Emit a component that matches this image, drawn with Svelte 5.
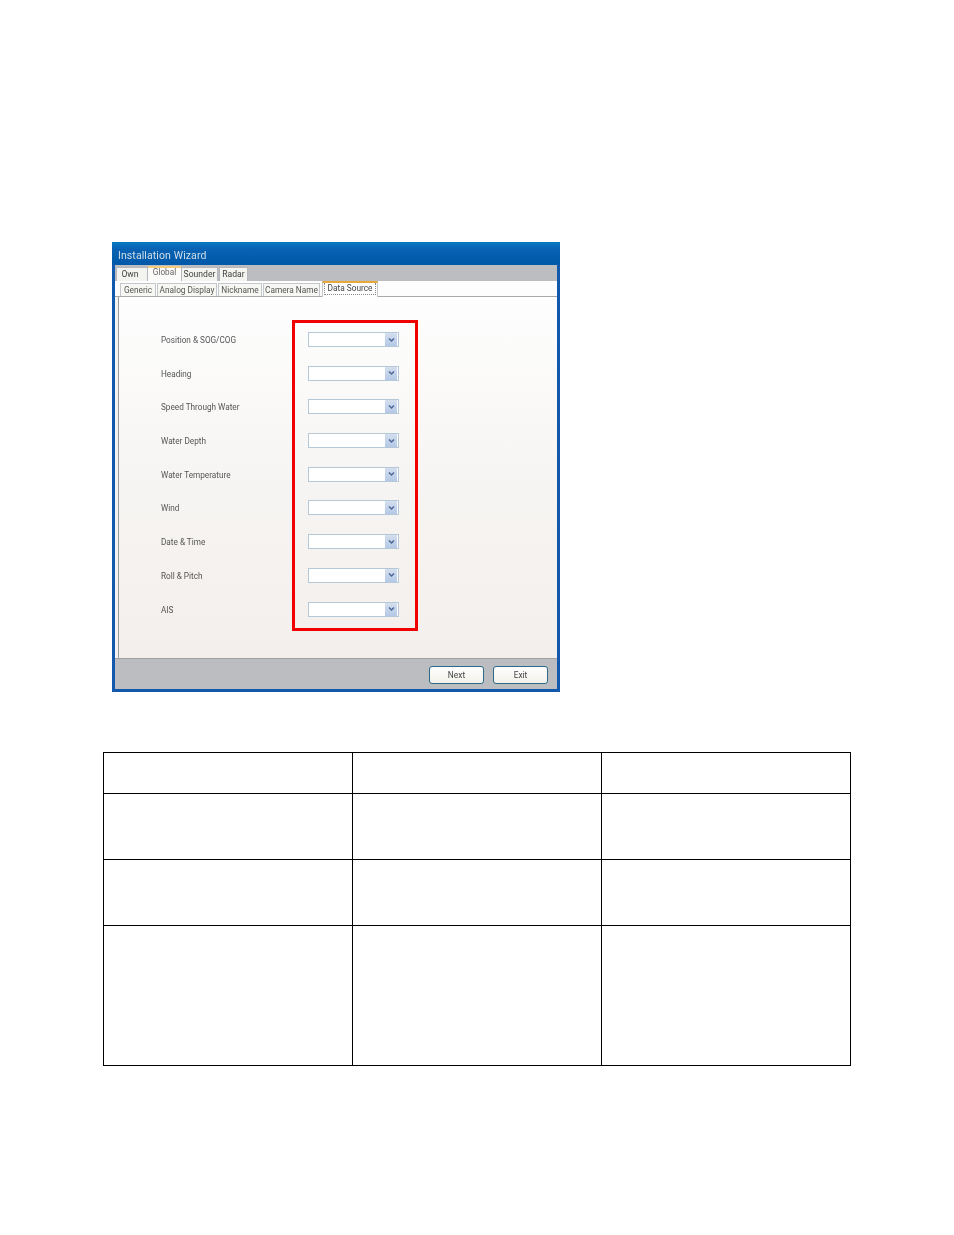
<script>
  const topTabs = [
    { label: 'Own', w: 32 },
    { label: 'Global', w: 33, active: true },
    { label: 'Sounder', w: 37 },
    { label: 'Radar', w: 29 }
  ];
  const subTabs = [
    { label: 'Generic', w: 36 },
    { label: 'Analog Display', w: 60 },
    { label: 'Nickname', w: 44 },
    { label: 'Camera Name', w: 57 },
    { label: 'Data Source', w: 56, active: true }
  ];
  const rows = ['Position & SOG/COG', 'Heading', 'Speed Through Water', 'Water Depth', 'Water Temperature', 'Wind', 'Date & Time', 'Roll & Pitch', 'AIS'];
  const tableRows = ['r1', 'r2', 'r3', 'r4'];
</script>

<div class="page">
  <section class="window">
    <header class="title"><span class="soft">Installation Wizard</span></header>
    <nav class="tabs">
      {#each topTabs as t}
        <span class="tab" class:active={t.active} style="width:{t.w}px"><span class="soft">{t.label}</span></span>
      {/each}
    </nav>
    <nav class="subtabs">
      {#each subTabs as t}
        <span class="subtab" class:active={t.active} style="width:{t.w}px"><span class="inner soft">{t.label}</span></span>
      {/each}
    </nav>
    <div class="body">
      <div class="panel">
        <div class="form">
          {#each rows as r}
            <div class="row">
              <span class="label soft">{r}</span>
              <span class="combo">
                <span class="arrow">
                  <svg width="7" height="6" viewBox="0 0 7 6"><path d="M1 1.5 L3.5 4 L6 1.5" fill="none" stroke="#4f6796" stroke-width="1.5"/></svg>
                </span>
              </span>
            </div>
          {/each}
        </div>
        <div class="redbox"></div>
      </div>
    </div>
    <footer class="footer">
      <button class="btn"><span class="soft">Next</span></button>
      <button class="btn"><span class="soft">Exit</span></button>
    </footer>
  </section>

  <div class="table">
    {#each tableRows as r}
      <div class="tr {r}">
        <div class="td"></div>
        <div class="td"></div>
        <div class="td"></div>
      </div>
    {/each}
  </div>
</div>

<style>
  :global(body) {
    margin: 0;
    background: #fff;
  }
  .page {
    width: 954px;
    height: 1235px;
    padding-top: 242px;
    box-sizing: border-box;
    font-family: Roboto, "Liberation Sans", sans-serif;
    overflow: hidden;
  }
  .soft {
    filter: blur(0.3px);
  }
  .window {
    width: 448px;
    height: 450px;
    margin-left: 112px;
    box-sizing: border-box;
    display: flex;
    flex-direction: column;
    border-left: 3px solid #1258ad;
    border-right: 3px solid #1258ad;
    border-bottom: 3px solid #1258ad;
    background: #bcbdc1;
  }
  .title {
    height: 23px;
    margin: 0 -3px;
    padding: 5px 0 0 6px;
    box-sizing: border-box;
    background: linear-gradient(#0a78c4 0, #0a62b4 30%, #0058a8 100%);
    color: #d3dfe8;
    font-size: 10.5px;
    line-height: 17px;
    font-family: Roboto, sans-serif;
    letter-spacing: 0.1px;
  }
  .title .soft {
    display: inline-block;
  }
  .tabs {
    display: flex;
    height: 16px;
    padding-left: 1px;
    background: #bcbdc1;
  }
  .tab {
    box-sizing: border-box;
    height: 14px;
    margin-top: 2px;
    background: #f3f3f0;
    border: 1px solid #b4b8bd;
    border-bottom: 0;
    text-align: center;
    color: #3f3f3f;
    font-size: 8.6px;
    line-height: 12px;
  }
  .tab:first-child {
    padding-right: 4px;
  }
  .tab:nth-child(3) {
    margin-right: 1px;
  }
  .tab.active {
    margin-top: 1px;
    height: 15px;
    background: #fbfbf9;
    border: 0;
    border-top: 2px solid #f3cb80;
    color: #666;
    font-size: 8.2px;
    line-height: 9px;
  }
  .subtabs {
    display: flex;
    height: 16px;
    box-sizing: border-box;
    padding-left: 5px;
    gap: 1px;
    background: #fdfdfd;
    border-bottom: 1px solid #a9a9a9;
  }
  .subtab {
    box-sizing: border-box;
    height: 13px;
    margin-top: 2px;
    border: 1px solid #c4c8cc;
    border-bottom: 0;
    background: #f7f7f4;
    text-align: center;
    color: #555;
    font-size: 8.3px;
    line-height: 12px;
    white-space: nowrap;
  }
  .subtab:nth-child(4) {
    margin-right: 1px;
  }
  .inner {
    display: block;
  }
  .subtab.active {
    margin-top: 0;
    height: 16px;
    background: #fff;
    border-top: 2px solid #e8a93c;
    color: #444;
  }
  .subtab.active .inner {
    height: 11px;
    margin: 0 1px;
    border: 1px dotted #888;
    border-top: 0;
    line-height: 10px;
  }
  .body {
    flex: 1;
    display: flex;
    padding-left: 3px;
    background: #f4f3f1;
  }
  .panel {
    position: relative;
    flex: 1;
    padding-top: 35px;
    border-left: 1px solid #9a9a9a;
    box-sizing: border-box;
    background: linear-gradient(#fefefe 0, #f6f4f2 55%, #f3efec 100%);
  }
  .form {
    display: flex;
    flex-direction: column;
    gap: 18.7px;
    padding-left: 42px;
  }
  .row {
    display: flex;
    align-items: center;
    height: 15px;
  }
  .label {
    width: 147px;
    padding-top: 2px;
    color: #555;
    font-size: 8.2px;
    line-height: 15px;
    white-space: nowrap;
  }
  .combo {
    display: flex;
    justify-content: flex-end;
    align-items: center;
    box-sizing: border-box;
    width: 91px;
    height: 15px;
    padding-right: 1px;
    background: #fff;
    border: 1px solid #b4c8d8;
  }
  .arrow {
    display: flex;
    align-items: center;
    justify-content: center;
    width: 12px;
    height: 13px;
    background: linear-gradient(#d4dfee, #b4c8e6);
  }
  .redbox {
    position: absolute;
    left: 173px;
    top: 23px;
    width: 126px;
    height: 311px;
    box-sizing: border-box;
    border: 3px solid #f00000;
  }
  .footer {
    display: flex;
    justify-content: flex-end;
    gap: 9px;
    height: 31px;
    box-sizing: border-box;
    padding: 7px 9px 0 0;
    border-top: 1px solid #9fa19f;
    background: #bcbdc1;
  }
  .btn {
    box-sizing: border-box;
    width: 55px;
    height: 18px;
    padding: 0;
    border: 1px solid #2c6a88;
    border-radius: 3px;
    background: linear-gradient(#ffffff, #f2f1ea);
    color: #444;
    font-family: inherit;
    font-size: 8.4px;
    line-height: 16px;
  }
  .table {
    width: 748px;
    margin: 60px 0 0 103px;
    box-sizing: border-box;
    border-top: 1px solid #000;
    border-left: 1px solid #000;
    display: flex;
    flex-direction: column;
  }
  .tr {
    display: grid;
    grid-template-columns: 249px 249px 249px;
    box-sizing: border-box;
  }
  .r1 { height: 41px; }
  .r2, .r3 { height: 66px; }
  .r4 { height: 140px; }
  .td {
    border-right: 1px solid #000;
    border-bottom: 1px solid #000;
  }
</style>
